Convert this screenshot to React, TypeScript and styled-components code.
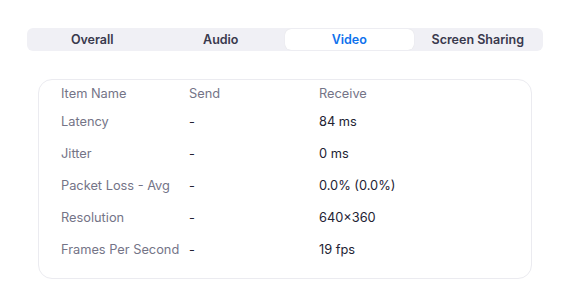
import styled, { createGlobalStyle } from "styled-components";

const GlobalStyle = createGlobalStyle`
  html, body {
    margin: 0;
    padding: 0;
    background: #ffffff;
    font-family: Inter, "Open Sans", "Liberation Sans", sans-serif;
    -webkit-font-smoothing: antialiased;
  }
`;

const Page = styled.div`
  width: 563px;
  height: 305px;
  box-sizing: border-box;
  padding-top: 28px;
  display: flex;
  flex-direction: column;
`;

const Tabs = styled.div`
  margin-left: 27px;
  width: 516px;
  height: 23px;
  box-sizing: border-box;
  padding: 1px;
  border-radius: 6px;
  background: #f0f0f5;
  display: grid;
  grid-template-columns: repeat(4, 1fr);
`;

const Tab = styled.div<{ active?: boolean }>`
  display: flex;
  justify-content: center;
  align-items: center;
  border-radius: 6px;
  font-size: 12.5px;
  font-weight: 600;
  color: ${({ active }) => (active ? "#0e72ed" : "#39394d")};
  background: ${({ active }) => (active ? "#ffffff" : "transparent")};
  box-shadow: ${({ active }) =>
    active ? "0 0 1px rgba(0, 0, 0, 0.12)" : "none"};
`;

const Card = styled.div`
  margin-top: 28px;
  margin-left: 38px;
  width: 494px;
  height: 200px;
  box-sizing: border-box;
  padding: 4px 22px 0;
  border: 1px solid #ebebf0;
  border-radius: 14px;
`;

const Row = styled.div<{ header?: boolean }>`
  display: grid;
  grid-template-columns: 128px 130px 1fr;
  align-items: center;
  height: ${({ header }) => (header ? "18px" : "32px")};
  margin-bottom: ${({ header }) => (header ? "3px" : "0")};
  font-size: 12.8px;
`;

const Label = styled.span`
  color: #747487;
`;

const Value = styled.span<{ muted?: boolean }>`
  color: ${({ muted }) => (muted ? "#747487" : "#232333")};
`;

const tabs = ["Overall", "Audio", "Video", "Screen Sharing"];

const stats = [
  { name: "Latency", send: "-", receive: "84 ms" },
  { name: "Jitter", send: "-", receive: "0 ms" },
  { name: "Packet Loss - Avg", send: "-", receive: "0.0% (0.0%)" },
  { name: "Resolution", send: "-", receive: "640×360" },
  { name: "Frames Per Second", send: "-", receive: "19 fps" },
];

export default function App() {
  return (
    <>
      <GlobalStyle />
      <Page>
        <Tabs>
          {tabs.map((t) => (
            <Tab key={t} active={t === "Video"}>
              {t}
            </Tab>
          ))}
        </Tabs>
        <Card>
          <Row header>
            <Label>Item Name</Label>
            <Label>Send</Label>
            <Label>Receive</Label>
          </Row>
          {stats.map((s) => (
            <Row key={s.name}>
              <Label>{s.name}</Label>
              <Value>{s.send}</Value>
              <Value>{s.receive}</Value>
            </Row>
          ))}
        </Card>
      </Page>
    </>
  );
}
